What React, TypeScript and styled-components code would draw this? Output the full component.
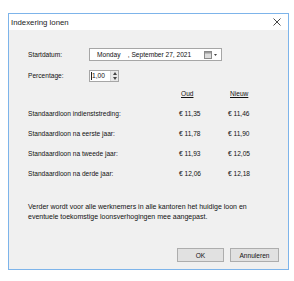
import React from "react";
import styled, { createGlobalStyle } from "styled-components";

const GlobalStyle = createGlobalStyle`
  html, body { margin: 0; padding: 0; background: #ffffff; }
  body { font-family: "Liberation Sans", Arial, sans-serif; color: #111; }
`;

const Window = styled.div`
  margin: 13px 0 0 8px;
  width: 281px;
  height: 257px;
  box-sizing: border-box;
  border: 1px solid #7db4ea;
  background: #f0f0f0;
  display: flex;
  flex-direction: column;
`;

const TitleBar = styled.div`
  height: 16px;
  background: #ffffff;
  display: flex;
  align-items: center;
  justify-content: space-between;
  padding: 0 7px 0 2px;
  font-size: 7.8px;
  color: #222;
`;

const Body = styled.div`
  flex: 1;
  display: flex;
  flex-direction: column;
  padding: 18px 9px 7px 19px;
`;

const FieldRow = styled.div<{ $gap?: number }>`
  display: grid;
  grid-template-columns: 61px auto;
  align-items: center;
  height: 13px;
  margin-top: ${(p) => p.$gap ?? 0}px;
  font-size: 6.6px;
`;

const DateBox = styled.div`
  width: 133px;
  height: 13px;
  box-sizing: border-box;
  border: 1px solid #a6a6a6;
  background: #fff;
  display: flex;
  align-items: center;
  padding: 0 3px 0 7px;
  font-size: 6.6px;
  white-space: pre;
`;

const DateText = styled.span`
  flex: 1;
`;

const SpinBox = styled.div`
  width: 30px;
  height: 12px;
  box-sizing: border-box;
  border: 1px solid #a6a6a6;
  background: #fff;
  display: flex;
  align-items: center;
  font-size: 6.6px;
`;

const SpinText = styled.span`
  flex: 1;
  padding-left: 1px;
  display: flex;
  align-items: center;
`;

const Caret = styled.span`
  display: inline-block;
  width: 1px;
  height: 8px;
  background: #222;
`;

const SpinButtons = styled.div`
  width: 7px;
  height: 10px;
  display: flex;
  flex-direction: column;
  border-left: 1px solid #d4d4d4;
`;

const SpinButton = styled.div`
  flex: 1;
  background: #e8e8e8;
  display: flex;
  align-items: center;
  justify-content: center;
`;

const Table = styled.div`
  margin-top: 5px;
  display: grid;
  grid-template-columns: 151px 49px auto;
  grid-auto-rows: 13px;
  row-gap: 7px;
  align-items: center;
  font-size: 6.6px;
`;

const Header = styled.span`
  text-decoration: underline;
  padding-left: 2px;
`;

const Paragraph = styled.p`
  margin: 22px 0 0 0;
  font-size: 7px;
  line-height: 10px;
  width: 240px;
`;

const ButtonRow = styled.div`
  margin-top: auto;
  display: flex;
  justify-content: flex-end;
  gap: 6px;
`;

const Button = styled.div<{ $w: number }>`
  width: ${(p) => p.$w}px;
  height: 14px;
  box-sizing: border-box;
  border: 1px solid #adadad;
  background: #e1e1e1;
  display: flex;
  align-items: center;
  justify-content: center;
  font-size: 6.6px;
`;

const CloseIcon = () => (
  <svg width="8" height="8" viewBox="0 0 8 8">
    <path d="M0.5 0.5 L7.5 7.5 M7.5 0.5 L0.5 7.5" stroke="#333" strokeWidth="0.9" />
  </svg>
);

const CalendarIcon = () => (
  <svg width="14" height="8" viewBox="0 0 14 8">
    <rect x="0.5" y="0.5" width="7" height="7" fill="#dcdcdc" stroke="#8a8a8a" />
    <rect x="1" y="1" width="6" height="1.5" fill="#9a9a9a" />
    <path d="M10 3 L13 3 L11.5 5 Z" fill="#444" />
  </svg>
);

const Arrow = ({ up }: { up?: boolean }) => (
  <svg width="4" height="3" viewBox="0 0 4 3">
    <path d={up ? "M0 3 L4 3 L2 0 Z" : "M0 0 L4 0 L2 3 Z"} fill="#444" />
  </svg>
);

const rows = [
  ["Standaardloon indienststreding:", "€ 11,35", "€ 11,46"],
  ["Standaardloon na eerste jaar:", "€ 11,78", "€ 11,90"],
  ["Standaardloon na tweede jaar:", "€ 11,93", "€ 12,05"],
  ["Standaardloon na derde jaar:", "€ 12,06", "€ 12,18"],
];

export default function App() {
  return (
    <>
      <GlobalStyle />
      <Window>
        <TitleBar>
          <span>Indexering lonen</span>
          <CloseIcon />
        </TitleBar>
        <Body>
          <FieldRow>
            <span>Startdatum:</span>
            <DateBox>
              <DateText>{"Monday    , September 27, 2021"}</DateText>
              <CalendarIcon />
            </DateBox>
          </FieldRow>
          <FieldRow $gap={8}>
            <span>Percentage:</span>
            <SpinBox>
              <SpinText>
                <Caret />
                1,00
              </SpinText>
              <SpinButtons>
                <SpinButton>
                  <Arrow up />
                </SpinButton>
                <SpinButton>
                  <Arrow />
                </SpinButton>
              </SpinButtons>
            </SpinBox>
          </FieldRow>
          <Table>
            <span />
            <Header>Oud</Header>
            <Header>Nieuw</Header>
            {rows.map((r) => (
              <React.Fragment key={r[0]}>
                <span>{r[0]}</span>
                <span>{r[1]}</span>
                <span>{r[2]}</span>
              </React.Fragment>
            ))}
          </Table>
          <Paragraph>
            Verder wordt voor alle werknemers in alle kantoren het huidige loon en eventuele
            toekomstige loonsverhogingen mee aangepast.
          </Paragraph>
          <ButtonRow>
            <Button $w={47}>OK</Button>
            <Button $w={49}>Annuleren</Button>
          </ButtonRow>
        </Body>
      </Window>
    </>
  );
}
